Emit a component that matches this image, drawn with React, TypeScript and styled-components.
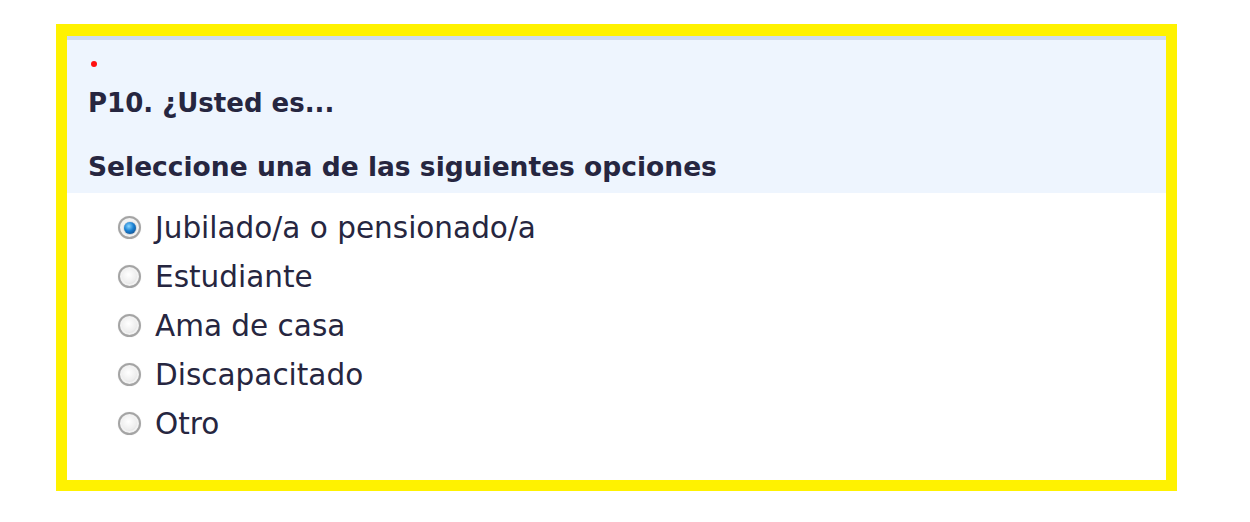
import React, { useState } from "react";
import styled, { createGlobalStyle } from "styled-components";

const GlobalStyle = createGlobalStyle`
  body {
    margin: 0;
    background: #ffffff;
    font-family: "DejaVu Sans", Verdana, sans-serif;
  }
`;

const options = [
  "Jubilado/a o pensionado/a",
  "Estudiante",
  "Ama de casa",
  "Discapacitado",
  "Otro",
];

export default function App() {
  const [selected, setSelected] = useState(0);

  return (
    <>
      <GlobalStyle />
      <Page>
        <QuestionBox>
          <Header>
            <Required />
            <QuestionTitle>P10. ¿Usted es...</QuestionTitle>
            <Help>Seleccione una de las siguientes opciones</Help>
          </Header>
          <OptionList>
            {options.map((label, i) => (
              <Option key={label} onClick={() => setSelected(i)}>
                <Radio checked={selected === i} />
                <OptionLabel>{label}</OptionLabel>
              </Option>
            ))}
          </OptionList>
        </QuestionBox>
      </Page>
    </>
  );
}

const Page = styled.div`
  padding: 24px 0 0 56px;
  width: 1121px;
`;

const QuestionBox = styled.div`
  border: 11px solid #fff200;
  border-top-width: 12px;
  background: #ffffff;
  height: 467px;
  box-sizing: border-box;
`;

const Header = styled.div`
  background: #eef5fe;
  border-top: 4px solid #cfdcf0;
  padding: 21px 0 0 21px;
  height: 157px;
  box-sizing: border-box;
  color: #262640;
`;

const Required = styled.div`
  width: 6px;
  height: 6px;
  border-radius: 50%;
  background: #ff1010;
  margin: 0 0 0 3px;
`;

const QuestionTitle = styled.div`
  font-weight: bold;
  font-size: 26px;
  line-height: 30px;
  margin-top: 21px;
`;

const Help = styled.div`
  font-weight: bold;
  font-size: 26.5px;
  line-height: 30px;
  margin-top: 34px;
`;

const OptionList = styled.div`
  display: flex;
  flex-direction: column;
  padding: 10px 0 0 51px;
`;

const Option = styled.label`
  display: flex;
  align-items: center;
  gap: 14px;
  height: 49px;
  cursor: pointer;
`;

const Radio = styled.span<{ checked: boolean }>`
  position: relative;
  flex: none;
  width: 23px;
  height: 23px;
  border-radius: 50%;
  box-sizing: border-box;
  border: 2px solid #a4a4a4;
  background: radial-gradient(circle at 45% 40%, #ffffff 0%, #eeeeee 50%, #c6c6c6 100%);
  box-shadow: inset 0 0 0 2px #f2f2f2, 0 0 1px #d0d0d0;

  &::after {
    content: "";
    display: ${(p) => (p.checked ? "block" : "none")};
    position: absolute;
    left: 3.5px;
    top: 3.5px;
    width: 12px;
    height: 12px;
    border-radius: 50%;
    background: radial-gradient(circle at 40% 35%, #8ad6ff 0%, #1a80d2 45%, #0a3b73 100%);
    box-shadow: 0 0 1px #0a3b73;
  }
`;

const OptionLabel = styled.span`
  font-size: 29.5px;
  color: #262640;
  line-height: 34px;
`;
